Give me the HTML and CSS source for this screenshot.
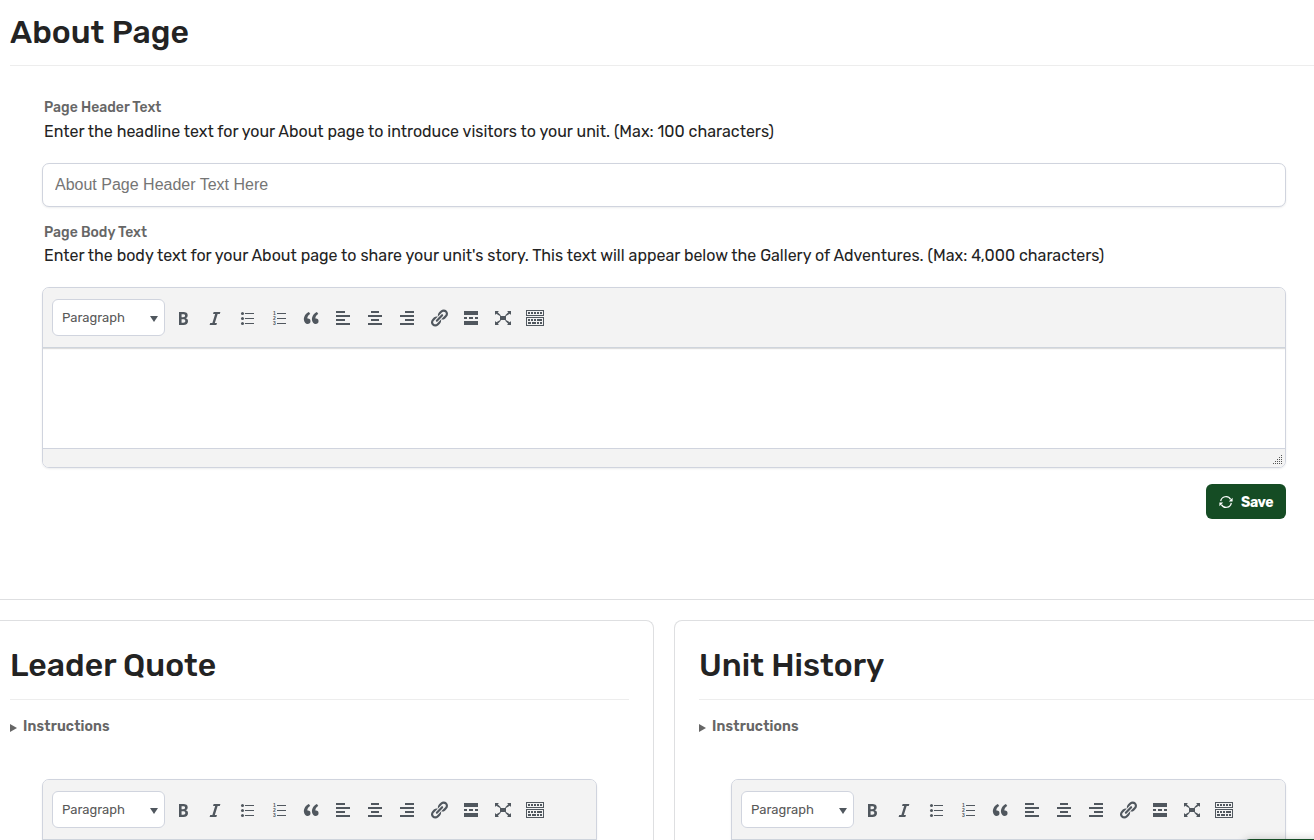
FILE: index.html
```html
<!DOCTYPE html>
<html lang="en">
<head>
    <meta charset="UTF-8">
    <meta name="viewport" content="width=device-width, initial-scale=1.0">
    <title>About Page</title>
    <link rel="stylesheet" href="styles.css">
</head>
<body>
    <svg class="sprite" xmlns="http://www.w3.org/2000/svg">
        <symbol id="bold" viewBox="0 0 20 20"><path d="M6 4v13h4.54c1.37 0 2.46-.33 3.26-1 .8-.66 1.2-1.58 1.2-2.77 0-.84-.17-1.51-.51-2.01s-.9-.85-1.67-1.03v-.09c.57-.1 1.02-.4 1.36-.9s.51-1.13.51-1.91c0-1.14-.39-1.98-1.17-2.5C12.75 4.26 11.5 4 9.78 4H6zm2.57 5.15V6.26h1.36c.73 0 1.27.11 1.61.32.34.22.51.58.51 1.07 0 .54-.16.92-.47 1.15s-.82.35-1.51.35h-1.5zm0 2.19h1.6c1.44 0 2.16.53 2.16 1.61 0 .6-.17 1.05-.51 1.34s-.86.43-1.57.43H8.57v-3.38z"/></symbol>
        <symbol id="italic" viewBox="0 0 20 20"><path d="M14.78 6h-2.13l-2.8 9h2.12l-.62 2H4.6l.62-2h2.14l2.8-9H8.03l.62-2h6.75z"/></symbol>
        <symbol id="ul" viewBox="0 0 20 20"><circle cx="5.5" cy="5.5" r="1.5"/><circle cx="5.5" cy="10.5" r="1.5"/><circle cx="5.5" cy="15.5" r="1.5"/><path d="M8 5h9v1H8zM8 10h9v1H8zM8 15h9v1H8z"/></symbol>
        <symbol id="ol" viewBox="0 0 20 20"><text x="4" y="7.4">1</text><text x="4" y="12.4">2</text><text x="4" y="17.4">3</text><path d="M8 5h9v1H8zM8 10h9v1H8zM8 15h9v1H8z"/></symbol>
        <symbol id="quote" viewBox="0 0 20 20"><path d="M9.49 13.22c0-.74-.2-1.38-.61-1.9-.62-.78-1.83-.88-2.53-.72-.29-1.65 1.11-3.75 2.92-4.65L7.88 4c-2.73 1.3-5.42 4.28-4.96 8.05C3.21 14.43 4.59 16 6.54 16c.85 0 1.56-.25 2.12-.75s.83-1.18.83-2.03zm8.05 0c0-.74-.2-1.38-.61-1.9-.63-.78-1.83-.88-2.53-.72-.29-1.65 1.11-3.75 2.92-4.65L15.93 4c-2.73 1.3-5.41 4.28-4.95 8.05.29 2.38 1.66 3.95 3.61 3.95.85 0 1.56-.25 2.12-.75s.83-1.18.83-2.03z"/></symbol>
        <symbol id="left" viewBox="0 0 20 20"><path d="M12 5V3H3v2h9zm5 4V7H3v2h14zm-5 4v-2H3v2h9zm5 4v-2H3v2h14z"/></symbol>
        <symbol id="center" viewBox="0 0 20 20"><path d="M14 5V3H6v2h8zm3 4V7H3v2h14zm-3 4v-2H6v2h8zm3 4v-2H3v2h14z"/></symbol>
        <symbol id="right" viewBox="0 0 20 20"><path d="M17 5V3H8v2h9zm0 4V7H3v2h14zm0 4v-2H8v2h9zm0 4v-2H3v2h14z"/></symbol>
        <symbol id="link" viewBox="0 0 20 20"><path d="M17.74 2.76c1.68 1.69 1.68 4.41 0 6.1l-1.53 1.52c-1.12 1.12-2.7 1.47-4.14 1.09l2.62-2.61.76-.77.76-.76c.84-.84.84-2.2 0-3.04-.84-.85-2.2-.85-3.04 0l-.77.76-3.38 3.38c-.37-1.44-.02-3.02 1.1-4.14l1.52-1.53c1.69-1.68 4.42-1.68 6.1 0zM8.59 13.43l5.34-5.34c.42-.42.42-1.1 0-1.52-.44-.43-1.13-.39-1.53 0l-5.33 5.34c-.42.42-.42 1.1 0 1.52.44.43 1.13.39 1.52 0zm-.76 2.29l4.14-4.15c.38 1.44.03 3.02-1.09 4.14l-1.52 1.53c-1.69 1.68-4.41 1.68-6.1 0-1.68-1.68-1.68-4.42 0-6.1l1.53-1.52c1.12-1.12 2.7-1.47 4.14-1.1l-4.14 4.15c-.85.84-.85 2.2 0 3.05.84.84 2.2.84 3.04 0z"/></symbol>
        <symbol id="more" viewBox="0 0 20 20"><path d="M17 7V3H3v4h14zM6 11V9H3v2h3zm6 0V9H8v2h4zm5 0V9h-3v2h3zm0 6v-4H3v4h14z"/></symbol>
        <symbol id="expand" viewBox="0 0 20 20"><path d="M7 8h6v4H7zM2 13v4h4l-1.2-1.2L8 12.6 7.2 12l-3.8 2.2zM14 17h4v-4l-1.2 1.2L13 12l-1 .6 3.2 3.2zM14 3l1.3 1.3L12 7.4l1 .6 3.8-2.2L18 7V3zM6 3H2v4l1.2-1.2L7 8l1-.6-3.3-3.1z"/></symbol>
        <symbol id="toggle" viewBox="0 0 20 20"><path d="M19 2v6H1V2h18zm-1 5V3H2v4h16zM5 4v2H3V4h2zm3 0v2H6V4h2zm3 0v2H9V4h2zm3 0v2h-2V4h2zm3 0v2h-2V4h2zm2 5v9H1V9h18zm-1 8v-7H2v7h16zM5 11v2H3v-2h2zm3 0v2H6v-2h2zm3 0v2H9v-2h2zm6 0v2h-5v-2h5zm-11 3v2H3v-2h3zm5 0v2H7v-2h4zm3 0v2h-2v-2h2zm3 0v2h-2v-2h2z"/></symbol>
    </svg>

    <div class="page">
        <section class="about">
            <h1>About Page</h1>
            <div class="fields">
                <label for="header_text">Page Header Text</label>
                <p class="help">Enter the headline text for your About page to introduce visitors to your unit. (Max: 100 characters)</p>
                <input type="text" id="header_text" placeholder="About Page Header Text Here">

                <label for="body_text">Page Body Text</label>
                <p class="help help-body">Enter the body text for your About page to share your unit's story. This text will appear below the Gallery of Adventures. (Max: 4,000 characters)</p>
                <div class="editor">
                    <div class="toolbar">
                        <button class="format"><span>Paragraph</span><i class="caret"></i></button>
                        <svg><use href="#bold"/></svg>
                        <svg><use href="#italic"/></svg>
                        <svg><use href="#ul"/></svg>
                        <svg><use href="#ol"/></svg>
                        <svg><use href="#quote"/></svg>
                        <svg><use href="#left"/></svg>
                        <svg><use href="#center"/></svg>
                        <svg><use href="#right"/></svg>
                        <svg><use href="#link"/></svg>
                        <svg><use href="#more"/></svg>
                        <svg><use href="#expand"/></svg>
                        <svg><use href="#toggle"/></svg>
                    </div>
                    <div class="content" id="body_text" contenteditable="true"></div>
                    <div class="statusbar">
                        <svg class="grip" viewBox="0 0 10 10"><path d="M8 0h1v1H8zM6 2h1v1H6zM8 2h1v1H8zM4 4h1v1H4zM6 4h1v1H6zM8 4h1v1H8zM2 6h1v1H2zM4 6h1v1H4zM6 6h1v1H6zM8 6h1v1H8zM0 8h1v1H0zM2 8h1v1H2zM4 8h1v1H4zM6 8h1v1H6zM8 8h1v1H8z"/></svg>
                    </div>
                </div>
                <div class="actions">
                    <button class="save">
                        <svg viewBox="0 0 14 14"><path d="M1.7 6.2A5.3 5.3 0 0 1 11.6 4.4M12.3 7.8A5.3 5.3 0 0 1 2.4 9.6"/><path class="tip" d="M13.6 2.8v3.7H9.8zM.4 11.2V7.5h3.8z"/></svg>
                        <span>Save</span>
                    </button>
                </div>
            </div>
        </section>

        <div class="cards">
            <section class="card">
                <h1>Leader Quote</h1>
                <details>
                    <summary>Instructions</summary>
                </details>
                <div class="fields">
                    <div class="editor">
                        <div class="toolbar">
                            <button class="format"><span>Paragraph</span><i class="caret"></i></button>
                            <svg><use href="#bold"/></svg>
                            <svg><use href="#italic"/></svg>
                            <svg><use href="#ul"/></svg>
                            <svg><use href="#ol"/></svg>
                            <svg><use href="#quote"/></svg>
                            <svg><use href="#left"/></svg>
                            <svg><use href="#center"/></svg>
                            <svg><use href="#right"/></svg>
                            <svg><use href="#link"/></svg>
                            <svg><use href="#more"/></svg>
                            <svg><use href="#expand"/></svg>
                            <svg><use href="#toggle"/></svg>
                        </div>
                        <div class="content"></div>
                    </div>
                </div>
            </section>
            <section class="card">
                <h1>Unit History</h1>
                <details>
                    <summary>Instructions</summary>
                </details>
                <div class="fields">
                    <div class="editor">
                        <div class="toolbar">
                            <button class="format"><span>Paragraph</span><i class="caret"></i></button>
                            <svg><use href="#bold"/></svg>
                            <svg><use href="#italic"/></svg>
                            <svg><use href="#ul"/></svg>
                            <svg><use href="#ol"/></svg>
                            <svg><use href="#quote"/></svg>
                            <svg><use href="#left"/></svg>
                            <svg><use href="#center"/></svg>
                            <svg><use href="#right"/></svg>
                            <svg><use href="#link"/></svg>
                            <svg><use href="#more"/></svg>
                            <svg><use href="#expand"/></svg>
                            <svg><use href="#toggle"/></svg>
                        </div>
                        <div class="content"></div>
                    </div>
                </div>
            </section>
        </div>
    </div>
    <div class="floating"></div>
</body>
</html>
```

FILE: styles.css
```css
* {
    box-sizing: border-box;
}
body {
    margin: 0;
    height: 840px;
    overflow: hidden;
    background-color: #fff;
    color: #232323;
    font-family: Rubik, Roboto, sans-serif;
    font-size: 16px;
}
.sprite {
    display: none;
}
.page {
    width: 1358px;
    margin-left: -15px;
}
h1 {
    margin: 0;
    border-bottom: 1px solid #ededed;
    font-size: 32px;
    font-weight: 500;
    line-height: 38px;
}
.about {
    height: 600px;
    padding: 13px 25px 0;
    border-bottom: 1px solid #dedfe1;
}
.about h1 {
    height: 53px;
}
.fields {
    margin: 0 32px;
}
.about .fields {
    padding-top: 33px;
}
label {
    display: block;
    height: 20px;
    padding-left: 2px;
    color: #666;
    font-size: 14px;
    font-weight: 500;
    line-height: 18px;
}
.help {
    margin: 0 0 18px;
    padding-left: 2px;
    line-height: 26px;
    white-space: nowrap;
}
.help-body {
    margin-bottom: 20px;
    line-height: 23px;
}
input {
    display: block;
    width: 100%;
    height: 44px;
    margin-bottom: 17px;
    padding: 0 12px;
    border: 1px solid #d0d4de;
    border-radius: 7px;
    box-shadow: 0 1px 2px rgba(16, 24, 40, 0.08);
    font-family: "Liberation Sans", sans-serif;
    font-size: 16px;
}
input::placeholder {
    color: #757575;
}
.editor {
    overflow: hidden;
    border: 1px solid #d0d4de;
    border-radius: 7px;
    box-shadow: 0 1px 2px rgba(16, 24, 40, 0.08);
}
.toolbar {
    display: flex;
    align-items: center;
    gap: 12px;
    height: 60px;
    padding: 0 9px;
    border-bottom: 1px solid #ced4dc;
    background-color: #f3f3f3;
    box-shadow: 0 1px 1px #ddd;
}
.toolbar svg {
    flex: none;
    width: 20px;
    height: 20px;
    margin-top: 1px;
    fill: #50575e;
    font: 700 5px "Liberation Sans", sans-serif;
}
.format {
    display: flex;
    align-items: center;
    justify-content: space-between;
    width: 113px;
    height: 37px;
    margin-right: -4px;
    padding: 0 6px 0 9px;
    border: 1px solid #d0d4de;
    border-radius: 6px;
    background-color: #fff;
    color: #595959;
    font-family: inherit;
    font-size: 13px;
}
.caret {
    margin-top: 2px;
    border-top: 6px solid #50575e;
    border-right: 4px solid transparent;
    border-left: 4px solid transparent;
}
.content {
    height: 100px;
    outline: none;
}
.statusbar {
    display: flex;
    align-items: flex-end;
    justify-content: flex-end;
    height: 19px;
    padding: 0 2px 2px;
    border-top: 1px solid #d0d4de;
    background-color: #f3f3f3;
}
.grip {
    width: 10px;
    height: 10px;
    fill: #555;
}
.actions {
    display: flex;
    justify-content: flex-end;
    margin-top: 16px;
}
.save {
    display: flex;
    align-items: center;
    gap: 8px;
    width: 80px;
    height: 35px;
    padding: 1px 0 0 13px;
    border: none;
    border-radius: 6px;
    background-color: #154c24;
    color: #fff;
    font-family: inherit;
    font-size: 14px;
    font-weight: 700;
    letter-spacing: -0.4px;
}
.save svg {
    width: 14px;
    height: 14px;
    margin-top: -1px;
    fill: none;
    stroke: #fff;
    stroke-width: 1.2;
}
.save .tip {
    fill: #fff;
    stroke: none;
}
.cards {
    display: grid;
    grid-template-columns: 669px 669px;
    gap: 20px;
    margin-top: 20px;
}
.card {
    height: 220px;
    padding: 25px 24px 0;
    overflow: hidden;
    border: 1px solid #dedfe1;
    border-bottom: none;
    border-radius: 8px 8px 0 0;
}
.card h1 {
    height: 54px;
}
details {
    height: 79px;
    padding-top: 17px;
    color: #666;
    font-size: 14px;
    font-weight: 600;
    line-height: 20px;
    letter-spacing: 0.15px;
}
summary {
    display: flex;
    align-items: center;
    gap: 6px;
    list-style: none;
}
summary::before {
    content: "";
    margin-top: 2px;
    border-top: 4px solid transparent;
    border-bottom: 4px solid transparent;
    border-left: 7px solid #666;
}
.floating {
    position: fixed;
    top: 839px;
    left: 1244px;
    width: 90px;
    height: 40px;
    border-radius: 6px;
    background-color: #154c24;
    box-shadow: 0 0 8px rgba(0, 0, 0, 0.2);
}
```
